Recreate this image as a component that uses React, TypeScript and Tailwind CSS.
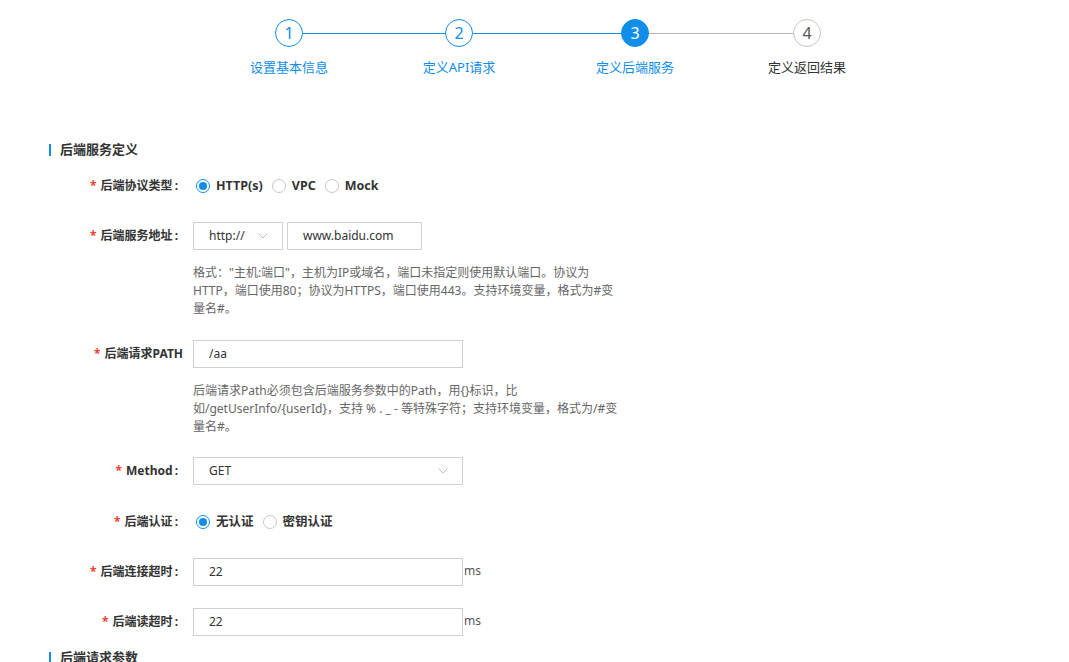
import React from 'react';

interface Step {
  num: number;
  title: string;
  state: 'done' | 'active' | 'wait';
}

const steps: Step[] = [
  { num: 1, title: '设置基本信息', state: 'done' },
  { num: 2, title: '定义API请求', state: 'done' },
  { num: 3, title: '定义后端服务', state: 'active' },
  { num: 4, title: '定义返回结果', state: 'wait' },
];

function Chevron() {
  return (
    <svg width="10" height="6" viewBox="0 0 10 6">
      <polyline points="0.5,0.5 5,5 9.5,0.5" fill="none" stroke="#bdbdbd" strokeWidth="1" />
    </svg>
  );
}

function StepItem({ step }: { step: Step }) {
  const circle =
    step.state === 'active'
      ? 'bg-[#108ee9] border-[#108ee9] text-white'
      : step.state === 'done'
      ? 'bg-white border-[#108ee9] text-[#108ee9]'
      : 'bg-white border-[#c4c4c4] text-[#555]';
  return (
    <div className="flex w-[28px] flex-col items-center">
      <div className={`flex h-[28px] w-[28px] items-center justify-center rounded-full border text-[16px] ${circle}`}>
        {step.num}
      </div>
      <div
        className={`mt-[11px] whitespace-nowrap text-[13px] leading-[18px] ${
          step.state === 'wait' ? 'text-[#333]' : 'text-[#108ee9]'
        }`}
      >
        {step.title}
      </div>
    </div>
  );
}

function Radio({ checked, label }: { checked?: boolean; label: string }) {
  return (
    <label className="flex items-center gap-[6px]">
      {checked ? (
        <span className="flex h-[14px] w-[14px] items-center justify-center rounded-full border border-[#108ee9] bg-white">
          <span className="h-[8px] w-[8px] rounded-full bg-[#108ee9]" />
        </span>
      ) : (
        <span className="h-[14px] w-[14px] rounded-full border border-[#c8c8c8] bg-white" />
      )}
      <span className="text-[12.5px] font-bold text-[#333]">{label}</span>
    </label>
  );
}

function FormRow({
  label,
  colon = true,
  className = '',
  children,
}: {
  label: string;
  colon?: boolean;
  className?: string;
  children: React.ReactNode;
}) {
  return (
    <div className={`flex h-[28px] items-center ${className}`}>
      <div className={`w-[186px] whitespace-nowrap text-right font-bold text-[#333] ${colon ? '' : 'pr-[3px]'}`}>
        <span className="mr-[4px] text-[#f04134]">*</span>
        {label}
        {colon && <span className="ml-[2px] mr-[8px]">:</span>}
      </div>
      <div className="ml-[7px] flex items-center">{children}</div>
    </div>
  );
}

function SectionTitle({ title, className = '' }: { title: string; className?: string }) {
  return (
    <div className={`flex h-[20px] items-center pl-[49px] ${className}`}>
      <span className="h-[12px] w-[2px] bg-[#108ee9]" />
      <span className="ml-[9px] text-[13px] font-bold text-[#333]">{title}</span>
    </div>
  );
}

export default function App() {
  return (
    <div
      className="min-h-[662px] w-full bg-white text-[12px] text-[#333]"
      style={{ fontFamily: '"Noto Sans", "Noto Sans CJK SC", sans-serif' }}
    >
      {/* Steps */}
      <div className="flex items-start pl-[275px] pt-[19px]">
        <StepItem step={steps[0]} />
        <div className="mt-[14px] h-px w-[142px] bg-[#108ee9]" />
        <StepItem step={steps[1]} />
        <div className="mt-[14px] h-px w-[148px] bg-[#108ee9]" />
        <StepItem step={steps[2]} />
        <div className="mt-[14px] h-px w-[144px] bg-[#b5b5b5]" />
        <StepItem step={steps[3]} />
      </div>

      <SectionTitle title="后端服务定义" className="mt-[64px]" />

      <FormRow label="后端协议类型" className="mt-[12px]">
        <div className="ml-[3px] flex items-center gap-[9px]">
          <Radio checked label="HTTP(s)" />
          <Radio label="VPC" />
          <Radio label="Mock" />
        </div>
      </FormRow>

      <FormRow label="后端服务地址" className="mt-[22px]">
        <div className="flex h-[28px] w-[90px] items-center justify-between border border-[#d0d0d0] pl-[15px] pr-[14px] text-[#333]">
          <span>http://</span>
          <Chevron />
        </div>
        <div className="ml-[4px] flex h-[28px] w-[135px] items-center border border-[#d0d0d0] px-[15px] text-[#333]">
          www.baidu.com
        </div>
      </FormRow>
      <div className="ml-[193px] mt-[14px] w-[440px] leading-[18px] text-[#666]">
        <div>格式："主机:端口"，主机为IP或域名，端口未指定则使用默认端口。协议为</div>
        <div>HTTP，端口使用80；协议为HTTPS，端口使用443。支持环境变量，格式为#变</div>
        <div>量名#。</div>
      </div>

      <FormRow label="后端请求PATH" colon={false} className="mt-[22px]">
        <div className="flex h-[28px] w-[270px] items-center border border-[#d0d0d0] px-[15px] text-[#333]">/aa</div>
      </FormRow>
      <div className="ml-[193px] mt-[14px] w-[440px] leading-[18px] text-[#666]">
        <div>后端请求Path必须包含后端服务参数中的Path，用{'{}'}标识，比</div>
        <div>如/getUserInfo/{'{userId}'}，支持 % . _ - 等特殊字符；支持环境变量，格式为/#变</div>
        <div>量名#。</div>
      </div>

      <FormRow label="Method" className="mt-[21px]">
        <div className="flex h-[28px] w-[270px] items-center justify-between border border-[#d0d0d0] pl-[15px] pr-[14px] text-[#333]">
          <span>GET</span>
          <Chevron />
        </div>
      </FormRow>

      <FormRow label="后端认证" className="mt-[23px]">
        <div className="ml-[3px] flex items-center gap-[9px]">
          <Radio checked label="无认证" />
          <Radio label="密钥认证" />
        </div>
      </FormRow>

      <FormRow label="后端连接超时" className="mt-[22px]">
        <div className="flex h-[28px] w-[270px] items-center border border-[#d0d0d0] px-[15px] text-[#333]">22</div>
        <span className="-mt-[3px] ml-px text-[#555]">ms</span>
      </FormRow>

      <FormRow label="后端读超时" className="mt-[22px]">
        <div className="flex h-[28px] w-[270px] items-center border border-[#d0d0d0] px-[15px] text-[#333]">22</div>
        <span className="-mt-[2px] ml-px text-[#555]">ms</span>
      </FormRow>

      <SectionTitle title="后端请求参数" className="mt-[12px]" />
    </div>
  );
}
